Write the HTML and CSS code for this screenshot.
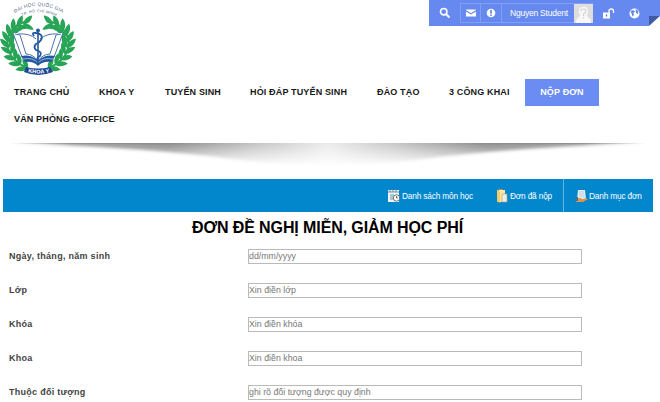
FILE: index.html
```
<!DOCTYPE html>
<html lang="vi">
<head>
<meta charset="utf-8">
<title>Khoa Y - Nộp đơn</title>
<link rel="stylesheet" href="styles.css">
</head>
<body>
<header class="header">
  <svg class="logo" width="78" height="78" viewBox="0 0 78 78" role="img" aria-label="Khoa Y">
    <defs>
      <path id="arc-top" d="M15 13Q37 -1 62 12.500"/>
      <path id="arc-second" d="M22 16Q38 8.500 56 16"/>
      <path id="arc-bottom" d="M26 71.500Q38 75.500 52 71.500"/>
      <path id="leaf" d="M0 1C-4 0 -7.500 -4 -7.500 -9C-3 -8 0 -5 0 -2C.5 -5 3 -8 6.500 -9C7 -4 4 0 0 1Z"/>
      <g id="branch">
        <path d="M27 68Q4 57 8 38Q12 26 24 22" fill="none" stroke="#28a457" stroke-width="2"/>
        <use href="#leaf" transform="translate(27 68) rotate(-58)"/>
        <use href="#leaf" transform="translate(20 64) rotate(-48)"/>
        <use href="#leaf" transform="translate(15 59) rotate(-36)"/>
        <use href="#leaf" transform="translate(11 53) rotate(-20)"/>
        <use href="#leaf" transform="translate(8.500 47) rotate(-6)"/>
        <use href="#leaf" transform="translate(8.500 41) rotate(8)"/>
        <use href="#leaf" transform="translate(10 35) rotate(24)"/>
        <use href="#leaf" transform="translate(13 30) rotate(42)"/>
        <use href="#leaf" transform="translate(18 26) rotate(62)"/>
        <use href="#leaf" transform="translate(24 24) rotate(84)"/>
      </g>
    </defs>
    <g fill="#28a457">
      <use href="#branch"/>
      <use href="#branch" transform="translate(76 0) scale(-1 1)"/>
    </g>
    <g fill="#fff" stroke="#4a72ab" stroke-width="1">
      <path d="M13 33L22 57Q31 55 38 62Q45 55 54 57L63 33"/>
      <path d="M15 34L20 35L26 54Q33 54 38 61Q43 54 50 54L56 35L61 34"/>
      <path d="M18 34Q30 33 36 39M58 34Q47 33 40 39"/>
    </g>
    <path d="M21 56Q31 54 38 61Q45 54 55 56L51 62Q43 61 38 66Q33 61 25 62Z" fill="#2258a0"/>
    <path d="M23 59Q33 57 38 63Q43 57 53 59" fill="none" stroke="#cbd8eb" stroke-width=".7"/>
    <path d="M38 30V64" stroke="#2258a0" stroke-width="1.600"/>
    <circle cx="38" cy="30.500" r="2" fill="#2258a0"/>
    <path d="M34 36Q31 32 36 33Q44 34 41 40Q39 43 36 44Q33 47 36 50Q43 52 40 56Q36 58 38 62" fill="none" stroke="#2258a0" stroke-width="1.800"/>
    <path d="M26 67Q38 70 50 67L53 72Q38 78 24 72Z" fill="#1d4795"/>
    <text class="logo-top"><textPath href="#arc-top" textLength="50">ĐẠI HỌC QUỐC GIA</textPath></text>
    <text class="logo-second"><textPath href="#arc-second" textLength="35">TP. HỒ CHÍ MINH</textPath></text>
    <text class="logo-name"><textPath href="#arc-bottom" startOffset="2" textLength="22">KHOA Y</textPath></text>
  </svg>
  <div class="userbar">
    <span class="cell search"><svg width="12" height="12" viewBox="0 0 12 12"><circle cx="4.700" cy="4.700" r="3.200" fill="none" stroke="#fff" stroke-width="1.600"/><path d="M7 7L10.500 10.500" stroke="#fff" stroke-width="2"/></svg></span>
    <span class="cell mail"><svg width="10" height="8" viewBox="0 0 10 8"><path d="M0 1Q0 .5.500.5H9.500Q10 .5 10 1L5 4.200ZM0 2.500L5 5.500L10 2.500V7.500H0Z" fill="#fff"/></svg></span>
    <span class="cell alert"><svg width="10" height="10" viewBox="0 0 10 10"><circle cx="5" cy="5" r="4.300" fill="#fff"/><path d="M5 2V5.700M5 6.500V8" stroke="#526fc2" stroke-width="1.400"/></svg></span>
    <span class="cell user"><span>Nguyen Student</span><svg width="19" height="19" viewBox="0 0 19 19"><path d="M0 0H19V19H0Z" fill="#dedede"/><path d="M5 8C4 1 15 1 14 8L13 12L17 16V19H2V16L6 12Z" fill="#f7f7f7"/><path d="M7 7Q7 5 9.500 5Q12.500 5 12 7.500Q11.500 9 9.500 10V12M9.500 13V14.500" fill="none" stroke="#d2d2d2" stroke-width="1.200"/></svg></span>
    <span class="cell lock"><svg width="13" height="11" viewBox="0 0 13 11"><path d="M1 4.500H8V10.500H1Z" fill="#fff"/><path d="M7 5V3Q7 1 9.300 1Q11.500 1 11.500 3V5" fill="none" stroke="#fff" stroke-width="1.300"/><path d="M4.500 6.500V8.500" stroke="#526fc2" stroke-width="1.300"/></svg></span>
    <span class="cell globe"><svg width="11" height="11" viewBox="0 0 11 11"><circle cx="5.500" cy="5.500" r="5" fill="#fff"/><path d="M1.500 3L4 2L6 3.500L4.500 5L5 7L3.500 8.500L2.500 5.500ZM6.500 1L9.500 3L9 6L7 5Z" fill="#6689ef"/></svg></span>
    <svg class="fold" width="11" height="10" viewBox="0 0 11 10"><path d="M0 10V0H11Z" fill="#4359a4"/><path d="M0 10L11 0V10Z" fill="#fff"/></svg>
  </div>
</header>
<nav class="nav">
  <a class="home">TRANG CHỦ</a><a class="faculty">KHOA Y</a><a class="admission">TUYỂN SINH</a><a class="questions">HỎI ĐÁP TUYỂN SINH</a><a class="training">ĐÀO TẠO</a><a class="public">3 CÔNG KHAI</a><a class="active">NỘP ĐƠN</a><a class="office">VĂN PHÒNG e-OFFICE</a>
</nav>
<div class="shade">
  <svg width="660" height="30" viewBox="0 0 660 30">
    <defs>
      <filter id="soft" x="-5%" y="-20%" width="110%" height="150%"><feGaussianBlur stdDeviation="4 1.500"/></filter>
      <linearGradient id="tone"><stop offset="0" stop-color="#888" stop-opacity="0"/><stop offset=".1" stop-color="#888" stop-opacity=".85"/><stop offset=".25" stop-color="#8b8b8b"/><stop offset=".38" stop-color="#c2c2c2"/><stop offset=".5" stop-color="#ececec"/><stop offset=".62" stop-color="#c2c2c2"/><stop offset=".75" stop-color="#8b8b8b"/><stop offset=".9" stop-color="#888" stop-opacity=".85"/><stop offset="1" stop-color="#888" stop-opacity="0"/></linearGradient>
      <linearGradient id="fade" x2="0" y2="1"><stop offset="0" stop-color="#fff" stop-opacity="0"/><stop offset="1" stop-color="#fff"/></linearGradient>
    </defs>
    <path d="M10 0H646Q530 4 440 14Q328 32 216 14Q126 4 10 0Z" fill="url(#tone)" filter="url(#soft)"/>
    <path d="M10 0H646V.9Q520 1 460 3H196Q130 1 10 .9Z" fill="url(#tone)"/>
    <path d="M0 0H660V23H0Z" fill="url(#fade)"/><path d="M0 23H660V30H0Z" fill="#fff"/>
  </svg>
</div>
<div class="toolbar">
  <a class="subjects"><svg width="14" height="14" viewBox="0 0 14 14"><path d="M1 1H12V13H1Z" fill="#eef5f8"/><path d="M1 3H12M3 0V3M6 0V3M9 0V3M3 6H7M3 8H6M3 10H6" stroke="#53798c" stroke-width=".8"/><circle cx="9.500" cy="9" r="3.200" fill="#fff" stroke="#657b87"/><path d="M9.500 7V9H11" fill="none" stroke="#444" stroke-width=".7"/></svg><span>Danh sách môn học</span></a>
  <a class="submitted"><svg width="14" height="14" viewBox="0 0 14 14"><path d="M2 1L7 0V12L2 13Z" fill="#e2ac42"/><path d="M4 1H10V13H4Z" fill="#ffe69b"/><path d="M7 5H12V13H7Z" fill="#e7eff0" stroke="#b8a470" stroke-width=".7"/><path d="M2 1L5 3V14L2 12Z" fill="#f5cd68"/></svg><span>Đơn đã nộp</span></a>
  <a class="list"><svg width="14" height="14" viewBox="0 0 14 14"><path d="M4 1H11L12 10H3Z" fill="#deebf2"/><path d="M5 3H10M5 5H10M5 7H10" stroke="#b5cbd6" stroke-width=".8"/><path d="M2 9H6L9 10L12 9L14 10L9 13H2Z" fill="#dd9652"/><path d="M1 8H4V12H1Z" fill="#34769e"/></svg><span>Danh mục đơn</span></a>
</div>
<main>
  <h1>ĐƠN ĐỀ NGHỊ MIỄN, GIẢM HỌC PHÍ</h1>
  <form class="form">
    <label for="dob">Ngày, tháng, năm sinh</label><input id="dob" placeholder="dd/mm/yyyy">
    <label for="class">Lớp</label><input id="class" placeholder="Xin điền lớp">
    <label for="course">Khóa</label><input id="course" placeholder="Xin điền khóa">
    <label for="faculty">Khoa</label><input id="faculty" placeholder="Xin điền khoa">
    <label for="subject">Thuộc đối tượng</label><input id="subject" placeholder="ghi rõ đối tượng được quy định">
  </form>
</main>
</body>
</html>
```
FILE: styles.css
```
* { box-sizing: border-box; }
body { margin: 0; height: 402px; overflow: hidden; background: #fff; font-family: "Liberation Sans", Arial, sans-serif; }
svg { display: block; flex: none; }
.header { display: flex; justify-content: space-between; height: 79px; }
.logo { overflow: visible; }
.logo-top { font-size: 4.8px; fill: #4d6785; }
.logo-second { font-size: 3.8px; fill: #4d6785; }
.logo-name { font-size: 5.5px; font-weight: bold; fill: #fff; }
.userbar { display: flex; position: relative; width: 231px; height: 26px; background: #6689ef; color: #fff; }
.cell { display: flex; align-items: center; justify-content: center; height: 20px; margin-top: 3px; }
.search { width: 31px; }
.mail { width: 21px; border: 1px solid #829ff4; }
.alert { width: 21px; border: 1px solid #829ff4; border-left: 0; }
.user { width: 91px; justify-content: space-between; padding-left: 8px; border: 1px solid #829ff4; border-left: 0; border-right: 0; font-size: 8.5px; letter-spacing: -.22px; white-space: nowrap; }
.lock { width: 30px; }
.globe { width: 23px; }
.fold { position: absolute; right: 0; bottom: 0; }
.nav { display: flex; flex-wrap: wrap; align-content: flex-start; padding-left: 14px; height: 64px; font-size: 9px; font-weight: bold; line-height: 27px; letter-spacing: .15px; color: #181818; white-space: nowrap; }
.nav a { height: 27px; }
.home { width: 85px; }
.faculty { width: 66px; }
.admission { width: 85px; }
.questions { width: 127px; }
.training { width: 72px; }
.public { width: 76px; }
.nav .active { width: 74px; background: #6b8cf3; color: #fff; text-align: center; }
.office { width: 110px; }
.shade { height: 36px; }
.toolbar { display: flex; justify-content: flex-end; height: 33px; margin: 0 7px 0 3px; background: #0287cd; color: #fff; font-size: 8.3px; letter-spacing: -.17px; line-height: 10px; white-space: nowrap; }
.toolbar a { display: flex; align-items: center; gap: 1px; }
.subjects { width: 108px; }
.submitted { width: 68px; }
.list { width: 90px; padding-left: 10px; border-left: 1px solid #65b5de; }
h1 { margin: 0; height: 33px; padding-right: 5px; text-align: center; font-size: 16px; line-height: 31px; letter-spacing: -.1px; color: #000; white-space: nowrap; }
.form { display: grid; grid-template-columns: 239px 334px; grid-auto-rows: 34px; padding: 4px 0 0 9px; }
label { font-size: 9px; font-weight: bold; line-height: 15px; color: #444; letter-spacing: .28px; white-space: nowrap; }
input { width: 334px; height: 15px; padding: 0 0 1px; border: 1px solid #bababa; border-radius: 0; background: #fff; font: 8.8px/12px "Liberation Sans", Arial, sans-serif; outline: 0; }
input::placeholder { color: #777; opacity: 1; }
```
